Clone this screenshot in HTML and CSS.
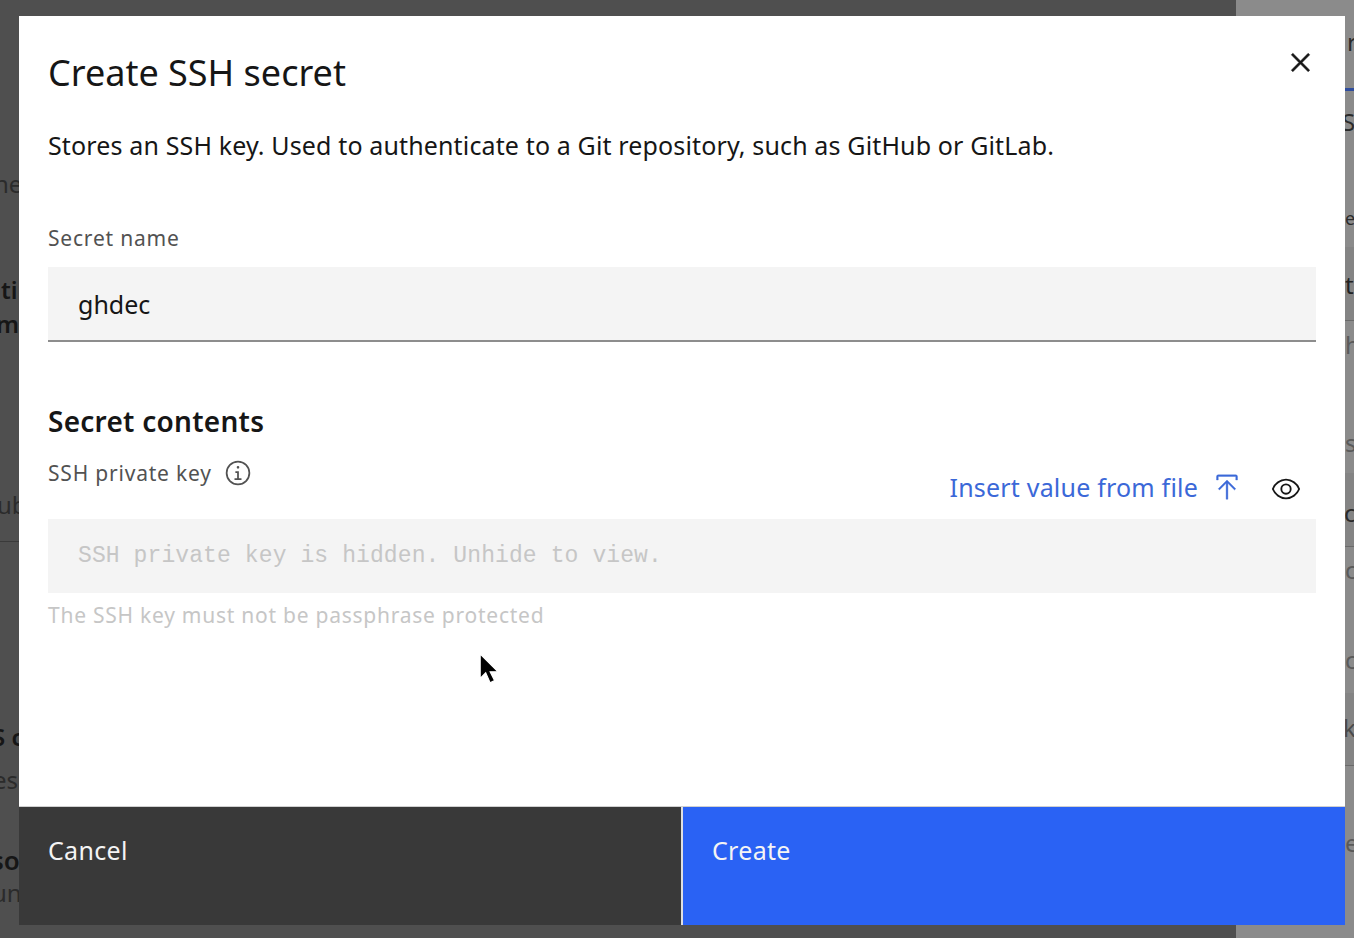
FILE: index.html
```html
<!DOCTYPE html>
<html lang="en">
<head>
    <meta charset="UTF-8">
    <meta name="viewport" content="width=device-width, initial-scale=1.0">
    <title>Create SSH secret</title>
    <link rel="stylesheet" href="styles.css">
</head>
<body>

    <!-- Page behind the dialog, only its edges show -->
    <div class="backdrop">
        <div class="page-main">
            <span class="frag frag-l1">ne</span>
            <span class="frag frag-bold frag-l2">ti</span>
            <span class="frag frag-bold frag-l3">m</span>
            <span class="frag frag-l4">ub</span>
            <span class="frag frag-bold frag-l5">S c</span>
            <span class="frag frag-l6">es</span>
            <span class="frag frag-bold frag-l7">so</span>
            <span class="frag frag-l8">un</span>
            <div class="rule rule-l"></div>
        </div>
        <div class="page-side">
            <div class="band band-1"></div>
            <div class="band band-2"></div>
            <div class="band band-3"></div>
            <div class="tab-line"></div>
            <span class="frag frag-r1">r</span>
            <span class="frag frag-r2">S</span>
            <span class="frag frag-r3">e</span>
            <span class="frag frag-r4">t</span>
            <span class="frag frag-r5">h</span>
            <span class="frag frag-r6">s</span>
            <span class="frag frag-r7">c</span>
            <span class="frag frag-r8">c</span>
            <span class="frag frag-r9">c</span>
            <span class="frag frag-r10">k</span>
            <span class="frag frag-r11">e</span>
        </div>
    </div>

    <!-- Dialog -->
    <div class="modal">
        <div class="modal-body">
            <div class="modal-header">
                <h2 class="modal-title">Create SSH secret</h2>
                <svg class="close-icon" viewBox="0 0 32 32" aria-label="Close">
                    <path d="M24 9.4 22.6 8 16 14.6 9.4 8 8 9.4l6.6 6.6L8 22.6 9.4 24l6.6-6.6 6.6 6.6 1.4-1.4-6.6-6.6z"/>
                </svg>
            </div>
            <p class="modal-desc">Stores an SSH key. Used to authenticate to a Git repository, such as GitHub or GitLab.</p>

            <label class="field-label name-label" for="secretName">Secret name</label>
            <input class="text-input" type="text" id="secretName" value="ghdec">

            <h3 class="section-title">Secret contents</h3>

            <div class="key-row">
                <div class="key-label">
                    <span class="field-label">SSH private key</span>
                    <svg class="info-icon" viewBox="0 0 32 32">
                        <path d="M17 22v-8h-4v2h2v6h-3v2h8v-2zM16 8a1.5 1.5 0 1 0 0 3 1.5 1.5 0 0 0 0-3z"/>
                        <path d="M16 30a14 14 0 1 1 0-28 14 14 0 0 1 0 28zm0-26a12 12 0 1 0 0 24 12 12 0 0 0 0-24z"/>
                    </svg>
                </div>
                <div class="key-actions">
                    <a class="file-link" href="#">Insert value from file</a>
                    <svg class="upload-icon" viewBox="0 0 32 32">
                        <path d="M6 18 7.41 19.41 15 11.83V30h2V11.83l7.59 7.58L26 18 16 8zM6 8V4h20v4h2V4a2 2 0 0 0-2-2H6a2 2 0 0 0-2 2v4z"/>
                    </svg>
                    <svg class="eye-icon" viewBox="0 0 32 32">
                        <path d="M30.94 15.66A16.69 16.69 0 0 0 16 5 16.69 16.69 0 0 0 1.06 15.66a1 1 0 0 0 0 .68A16.69 16.69 0 0 0 16 27a16.69 16.69 0 0 0 14.94-10.66 1 1 0 0 0 0-.68zM16 25c-5.3 0-10.9-3.93-12.93-9C5.1 10.93 10.7 7 16 7s10.9 3.93 12.93 9C26.9 21.07 21.3 25 16 25z"/>
                        <path d="M16 10a6 6 0 1 0 6 6 6 6 0 0 0-6-6zm0 10a4 4 0 1 1 4-4 4 4 0 0 1-4 4z"/>
                    </svg>
                </div>
            </div>
            <div class="key-input">SSH private key is hidden. Unhide to view.</div>
            <div class="helper">The SSH key must not be passphrase protected</div>
        </div>
        <div class="modal-footer">
            <button class="btn btn-cancel">Cancel</button>
            <button class="btn btn-create">Create</button>
        </div>
    </div>

    <!-- Mouse pointer -->
    <svg class="pointer" viewBox="0 0 20 30">
        <path class="pointer-edge" d="M2 1v22l5-5 4 9 4-2-4-8h7z"/>
    </svg>

</body>
</html>
```

FILE: styles.css
```css
html, body {
    margin: 0;
    height: 100%;
    overflow: hidden;
}
body {
    position: relative;
    width: 1354px;
    height: 938px;
    font-family: "Noto Sans", "Open Sans", sans-serif;
    color: #161616;
}
.backdrop {
    display: flex;
    height: 100%;
}
.page-main {
    position: relative;
    flex: 1;
    background: #4f4f4f;
}
.page-side {
    position: relative;
    width: 118px;
    background: #8b8b8b;
}

/* Fragments of the page behind */
.frag {
    position: absolute;
    font-size: 24px;
    line-height: 30px;
    color: #2b2b2b;
}
.frag-bold {
    font-weight: 600;
    color: #161616;
}
.frag-l1 { left: -6px; top: 169px; }
.frag-l2 { left: 1px; top: 275px; }
.frag-l3 { left: -4px; top: 309px; }
.frag-l4 { left: -3px; top: 490px; }
.frag-l5 { left: -8px; top: 722px; }
.frag-l6 { left: -7px; top: 765px; }
.frag-l7 { left: -9px; top: 845px; font-size: 26px; }
.frag-l8 { left: -8px; top: 878px; }
.rule-l {
    position: absolute;
    left: 0;
    top: 541px;
    width: 19px;
    height: 1px;
    background: #3a3a3a;
}
.band {
    position: absolute;
    left: 0;
    right: 0;
    background: #848484;
    border-bottom: 1px solid #6a6a6a;
}
.band-1 { top: 247px; height: 73px; }
.band-2 { top: 473px; height: 73px; }
.band-3 { top: 693px; height: 72px; }
.tab-line {
    position: absolute;
    left: 0;
    right: 0;
    top: 88px;
    height: 3px;
    background: #2f4d9e;
}
.frag-r1 { left: 111px; top: 27px; }
.frag-r2 { left: 106px; top: 107px; }
.frag-r3 { left: 109px; top: 203px; font-size: 18px; }
.frag-r4 { left: 109px; top: 270px; color: #222; }
.frag-r5 { left: 109px; top: 330px; color: #5a5a5a; }
.frag-r6 { left: 109px; top: 428px; color: #5a5a5a; }
.frag-r7 { left: 108px; top: 498px; color: #2b2b2b; }
.frag-r8 { left: 109px; top: 555px; color: #5a5a5a; }
.frag-r9 { left: 109px; top: 645px; color: #5a5a5a; }
.frag-r10 { left: 107px; top: 713px; color: #4a4a4a; }
.frag-r11 { left: 109px; top: 828px; color: #5a5a5a; }

/* Dialog */
.modal {
    position: absolute;
    left: 19px;
    top: 16px;
    width: 1326px;
    height: 909px;
    display: flex;
    flex-direction: column;
    background: #fff;
}
.modal-body {
    flex: 1;
    padding: 0 29px;
}
.modal-header {
    display: flex;
    justify-content: space-between;
    align-items: flex-start;
    height: 109px;
}
.modal-title {
    margin: 35px 0 0;
    font-size: 36px;
    line-height: 44px;
    font-weight: 400;
}
.close-icon {
    width: 37px;
    height: 37px;
    margin: 28px -3px 0 0;
    fill: #161616;
    stroke: #161616;
    stroke-width: 0.4;
}
.modal-desc {
    margin: 0;
    font-size: 25px;
    line-height: 40px;
    letter-spacing: 0.14px;
}
.field-label {
    font-size: 21px;
    line-height: 28px;
    letter-spacing: 0.8px;
    color: #525252;
}
.name-label {
    display: block;
    margin-top: 59px;
    margin-bottom: 15px;
}
.text-input {
    display: block;
    box-sizing: border-box;
    width: 100%;
    height: 75px;
    padding: 0 30px;
    border: 0;
    border-bottom: 2px solid #8d8d8d;
    background: #f4f4f4;
    font-family: inherit;
    font-size: 25px;
    color: #161616;
    outline: none;
}
.section-title {
    margin: 60px 0 0;
    font-size: 28px;
    line-height: 38px;
    letter-spacing: 0.25px;
    font-weight: 600;
}
.key-row {
    display: flex;
    justify-content: space-between;
    height: 79px;
}
.key-label {
    display: flex;
    align-items: center;
    gap: 12px;
    height: 36px;
    margin-top: 15px;
}
.info-icon {
    width: 28px;
    height: 28px;
    fill: #525252;
}
.key-actions {
    display: flex;
    align-items: center;
    height: 40px;
    margin-top: 27px;
}
.file-link {
    font-size: 25px;
    letter-spacing: 0.2px;
    color: #3b68d8;
    text-decoration: none;
}
.upload-icon {
    width: 28px;
    height: 28px;
    margin-left: 15px;
    fill: #3b68d8;
    stroke: #3b68d8;
    stroke-width: 0.4;
}
.eye-icon {
    width: 30px;
    height: 30px;
    margin: 4px 15px 0 30px;
    fill: #161616;
}
.key-input {
    box-sizing: border-box;
    height: 74px;
    padding: 0 30px;
    background: #f4f4f4;
    font-family: "Liberation Mono", monospace;
    font-size: 23px;
    line-height: 74px;
    letter-spacing: 0.1px;
    color: #c6c6c6;
}
.helper {
    margin-top: 8px;
    font-size: 21px;
    line-height: 28px;
    letter-spacing: 0.75px;
    color: #c6c6c6;
}
.modal-footer {
    display: flex;
    height: 119px;
    border-top: 1px solid #d0d0d0;
    box-sizing: border-box;
}
.btn {
    display: flex;
    align-items: flex-start;
    flex: 1;
    padding: 23px 29px 0;
    border: 0;
    text-align: left;
    font-family: inherit;
    font-size: 25px;
    line-height: 40px;
    letter-spacing: 0.3px;
    color: #f4f4f4;
}
.btn-cancel {
    background: #393939;
    border-right: 2px solid #e0e0e0;
}
.btn-create {
    background: #2a62f4;
}

.pointer {
    position: absolute;
    left: 478px;
    top: 653px;
    width: 22px;
    height: 33px;
}
.pointer-edge {
    fill: #000;
    stroke: #fff;
    stroke-width: 1;
}
```
